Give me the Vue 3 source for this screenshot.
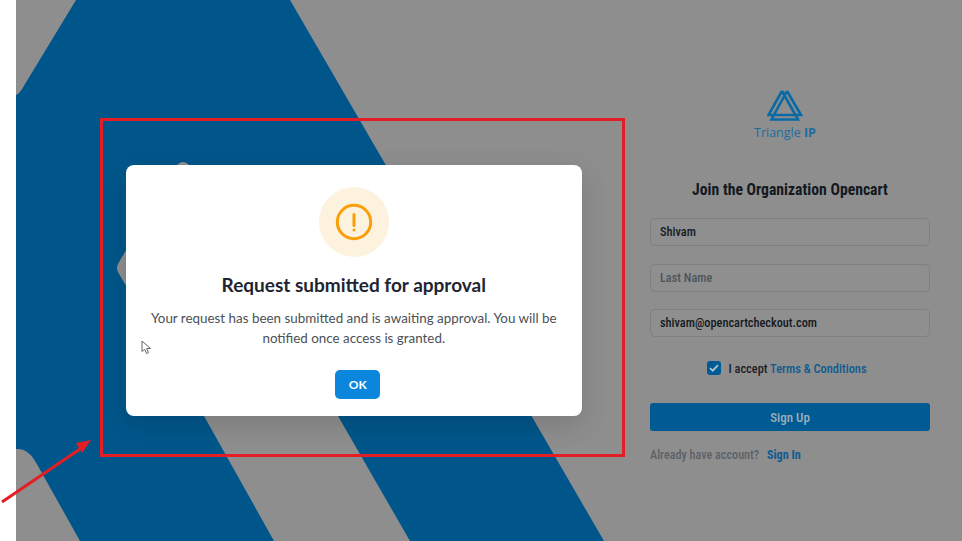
<script setup>
const fields = [
  { value: 'Shivam', placeholder: 'First Name' },
  { value: '', placeholder: 'Last Name' },
  { value: 'shivam@opencartcheckout.com', placeholder: 'Email' },
]
</script>

<template>
  <div class="page">
    <div class="strip"></div>
    <main class="main">
      <svg class="art" viewBox="16 0 946 541" width="946" height="541" aria-hidden="true">
        <path fill="#00568a" d="M76 0H290L604 541H16V95Q19 94 22 89Z" />
        <path fill="#8e8e8e" d="M16 449C25 448 32 454 38 466L80 541H16Z" />
        <path fill="#8e8e8e" d="M176 166Q183 158 190 166L338 416L410 541H274L204 416L119 274Q115 268 119 262Z" />
      </svg>

      <section class="form">
        <div class="logo">
          <svg width="36" height="33" viewBox="0 0 36 33" fill="none" stroke="#0a6aa6" stroke-width="2.600" aria-hidden="true">
            <path d="M15 2L1.500 26H34L20 2" />
            <path d="M20 2L4.500 30.500H31L15 2" />
          </svg>
          <div class="logo-text">Triangle <b>IP</b></div>
        </div>
        <h1 class="heading">Join the Organization Opencart</h1>
        <div class="fields">
          <input v-for="f in fields" :key="f.placeholder" class="field" readonly :value="f.value" :placeholder="f.placeholder" />
        </div>
        <div class="accept">
          <span class="check">
            <svg width="10" height="8" viewBox="0 0 10 8" fill="none" stroke="#b9c6cf" stroke-width="1.700"><path d="M1 4l2.700 2.700L9 1.200" /></svg>
          </span>
          <span>I accept <a class="link">Terms &amp; Conditions</a></span>
        </div>
        <button class="signup">Sign Up</button>
        <p class="already">Already have account? <a class="link strong">Sign In</a></p>
      </section>

      <div class="dialog">
        <div class="badge">
          <svg width="38" height="38" viewBox="0 0 38 38" fill="none" stroke="#fa9f07" aria-hidden="true">
            <circle cx="19" cy="19" r="16.700" stroke-width="3" />
            <path d="M19 11.500V22.500" stroke-width="3" stroke-linecap="round" />
            <circle cx="19" cy="27" r="1.500" fill="#fa9f07" stroke="none" />
          </svg>
        </div>
        <h2 class="title">Request submitted for approval</h2>
        <p class="message">Your request has been submitted and is awaiting approval. You will be notified once access is granted.</p>
        <button class="ok">OK</button>
      </div>

      <svg class="cursor" width="12" height="15" viewBox="0 0 12 15" aria-hidden="true">
        <path d="M1 1V11.500L3.700 9.200L5.500 13.500L7.500 12.600L5.700 8.500H9.500Z" fill="#fff" stroke="#666" stroke-width="1" />
      </svg>

      <div class="callout"></div>
      <svg class="arrow" width="104" height="70" viewBox="0 0 104 70" aria-hidden="true">
        <path d="M2 65L80 12" stroke="#e31e24" stroke-width="3" />
        <path d="M76 6L91 3L82 16Z" fill="#e31e24" />
      </svg>
    </main>
  </div>
</template>

<style scoped>
.page {
  width: 962px;
  height: 541px;
  display: flex;
  overflow: hidden;
  background: #fff;
  font-family: Roboto, "Liberation Sans", sans-serif;
}
.strip {
  width: 16px;
  flex: none;
}
.main {
  position: relative;
  flex: 1;
  display: flex;
  justify-content: flex-end;
  background: #8e8e8e;
}
.art {
  position: absolute;
  left: 0;
  top: 0;
}
.form {
  width: 280px;
  margin-right: 32px;
  padding-top: 89px;
  display: flex;
  flex-direction: column;
  font-stretch: 75%;
}
.logo {
  display: flex;
  flex-direction: column;
  align-items: center;
  margin-left: -10px;
  height: 91px;
}
.logo-text {
  margin-top: 2px;
  font: 400 12.500px/18px "Open Sans", sans-serif;
  color: #1c6c9f;
}
.logo-text b {
  font-weight: 700;
}
.heading {
  margin: 0 0 18px;
  text-align: center;
  font-size: 15.700px;
  line-height: 20px;
  font-weight: 700;
  color: #14191f;
}
.fields {
  display: flex;
  flex-direction: column;
  gap: 17.500px;
}
.field {
  box-sizing: border-box;
  width: 100%;
  height: 28px;
  padding: 0 9px;
  border: 1px solid #808080;
  border-radius: 5px;
  background: #8f8f8f;
  font: inherit;
  font-stretch: 75%;
  font-size: 12.300px;
  font-weight: 500;
  color: #14191f;
  outline: none;
}
.field::placeholder {
  color: #4d555c;
  opacity: 1;
}
.accept {
  margin-top: 22px;
  height: 18px;
  display: flex;
  align-items: center;
  justify-content: center;
  gap: 7px;
  margin-left: -6px;
  font-size: 12.400px;
  font-weight: 500;
  color: #1c2127;
}
.check {
  width: 14px;
  height: 14px;
  display: flex;
  align-items: center;
  justify-content: center;
  border-radius: 3px;
  background: #005b94;
}
.link {
  color: #0d5c90;
}
.strong {
  font-weight: 700;
  margin-left: 5px;
}
.signup {
  margin-top: 26px;
  height: 28px;
  border: 0;
  border-radius: 3px;
  background: #005b94;
  color: #9fb0bb;
  font: inherit;
  font-stretch: 75%;
  font-size: 13px;
  font-weight: 500;
}
.already {
  margin: 15px 0 0;
  font-size: 12.200px;
  line-height: 18px;
  font-weight: 500;
  color: #5b6268;
}
.dialog {
  position: absolute;
  left: 110px;
  top: 165px;
  box-sizing: border-box;
  width: 455.500px;
  height: 251px;
  padding-top: 22px;
  display: flex;
  flex-direction: column;
  align-items: center;
  border-radius: 8px;
  background: #fff;
  box-shadow: 0 8px 28px rgba(0, 0, 0, 0.14);
  font-family: Lato, sans-serif;
}
.badge {
  width: 70px;
  height: 70px;
  display: flex;
  align-items: center;
  justify-content: center;
  border-radius: 50%;
  background: #fdf2dd;
}
.title {
  margin: 17px 0 0;
  font-size: 19px;
  line-height: 22px;
  font-weight: 700;
  color: #1e2530;
}
.message {
  margin: 12px 0 0;
  width: 425px;
  text-align: center;
  font-size: 13.400px;
  line-height: 20px;
  color: #4b5057;
}
.ok {
  margin: 22px 0 0 8px;
  width: 45px;
  height: 29px;
  border: 0;
  border-radius: 5px;
  background: #0a86dc;
  color: #fff;
  font: inherit;
  font-size: 12px;
  font-weight: 700;
}
.cursor {
  position: absolute;
  left: 125px;
  top: 340px;
}
.callout {
  position: absolute;
  left: 84px;
  top: 118px;
  width: 525px;
  height: 339px;
  box-sizing: border-box;
  border: 3px solid #e31e24;
}
.arrow {
  position: absolute;
  left: -16px;
  top: 437px;
}
</style>
